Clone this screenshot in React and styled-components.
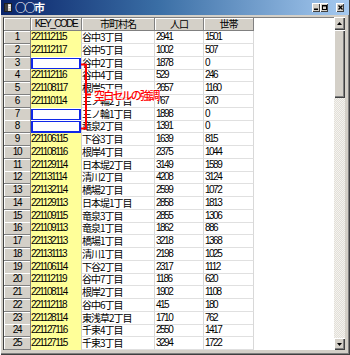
import React from "react";
import styled, { createGlobalStyle } from "styled-components";

const GlobalStyle = createGlobalStyle`
  html, body { margin: 0; padding: 0; background: #d4d0c8; }
  body { width: 350px; height: 355px; overflow: hidden; }
`;

const COLS = "27px 51px 73px 49px 50px 1fr";
const ROW_H = 12.76;
const NUM_FONT = `"Liberation Sans", Arial, sans-serif`;
const JP_FONT = `"Noto Sans CJK JP", "Noto Sans", sans-serif`;

const rows = [
  ["221112115", "谷中3丁目", "2941", "1501"],
  ["221112117", "谷中5丁目", "1002", "507"],
  ["", "谷中2丁目", "1878", "0"],
  ["221112116", "谷中4丁目", "529", "246"],
  ["221108117", "根岸5丁目", "2657", "1160"],
  ["221110114", "三ノ輪2丁目", "767", "370"],
  ["", "三ノ輪1丁目", "1898", "0"],
  ["", "竜泉2丁目", "1391", "0"],
  ["221106115", "下谷3丁目", "1639", "815"],
  ["221108116", "根岸4丁目", "2375", "1044"],
  ["221129114", "日本堤2丁目", "3149", "1589"],
  ["221131114", "清川2丁目", "4208", "3124"],
  ["221132114", "橋場2丁目", "2599", "1072"],
  ["221129113", "日本堤1丁目", "2858", "1813"],
  ["221109115", "竜泉3丁目", "2855", "1306"],
  ["221109113", "竜泉1丁目", "1862", "886"],
  ["221132113", "橋場1丁目", "3218", "1368"],
  ["221131113", "清川1丁目", "2198", "1025"],
  ["221106114", "下谷2丁目", "2317", "1112"],
  ["221112119", "谷中7丁目", "1186", "620"],
  ["221108114", "根岸2丁目", "1902", "1108"],
  ["221112118", "谷中6丁目", "415", "180"],
  ["221128114", "東浅草2丁目", "1710", "762"],
  ["221127116", "千束4丁目", "2550", "1417"],
  ["221127115", "千束3丁目", "3294", "1722"],
];

const Window = styled.div`
  position: relative;
  width: 350px;
  height: 355px;
  box-sizing: border-box;
  background: #d4d0c8;
  box-shadow: inset 1px 0 #ffffff, inset -1px -1px #404040, inset -2px -2px #808080;
  display: flex;
  flex-direction: column;
`;

const TitleBar = styled.div`
  height: 15px;
  margin: 0 1px;
  display: flex;
  align-items: center;
  padding-left: 3px;
  background: linear-gradient(to right, #0a246a 0%, #3a6ea5 45%, #a6caf0 100%);
`;

const AppIcon = styled.svg`
  width: 8px;
  height: 9px;
  flex: none;
`;

const Title = styled.span`
  margin-left: 3px;
  color: #ffffff;
  font-family: ${JP_FONT};
  font-weight: bold;
  font-size: 11px;
  letter-spacing: -1.5px;
  line-height: 15px;
  flex: 1;
`;

const Captions = styled.div`
  display: flex;
  align-items: center;
  margin-right: 5px;
`;

const CaptionButton = styled.div`
  width: 8px;
  height: 9px;
  box-sizing: border-box;
  background: #d4d0c8;
  box-shadow: inset 1px 1px #ffffff, inset -1px -1px #404040;
  display: flex;
  align-items: center;
  justify-content: center;
  margin-left: ${(p) => (p.$gap ? "8px" : "0")};
  svg { display: block; }
`;

const Client = styled.div`
  margin: 2px 5px 5px 3px;
  height: 333px;
  display: flex;
`;

const Grid = styled.div`
  flex: 1;
  box-sizing: border-box;
  border-top: 1px solid #808080;
  border-left: 1px solid #404040;
  background: #ffffff;
  overflow: hidden;
  display: flex;
  flex-direction: column;
`;

const HeaderRow = styled.div`
  display: grid;
  grid-template-columns: ${COLS};
  height: 13px;
  flex: none;
`;

const HeaderCell = styled.div`
  box-sizing: border-box;
  background: #d4d0c8;
  border-right: 1px solid #808080;
  border-bottom: 1px solid #808080;
  box-shadow: inset 1px 1px #ffffff;
  text-align: center;
  line-height: 12px;
  font-size: 10px;
  color: #000;
  font-family: ${(p) => (p.$latin ? NUM_FONT : JP_FONT)};
  letter-spacing: ${(p) => (p.$latin ? "-1.5px" : "-1px")};
  white-space: nowrap;
`;

const Row = styled.div`
  display: grid;
  grid-template-columns: ${COLS};
  height: ${ROW_H}px;
  flex: none;
`;

const RowHeader = styled.div`
  box-sizing: border-box;
  background: #d4d0c8;
  border-right: 1px solid #808080;
  border-bottom: 1px solid #808080;
  box-shadow: inset 1px 1px #ffffff;
  text-align: center;
  font-family: ${NUM_FONT};
  font-size: 10px;
  letter-spacing: -1.3px;
  line-height: 12px;
  color: #000;
`;

const KeyCell = styled.div`
  box-sizing: border-box;
  background: ${(p) => (p.$blank ? "#ffffff" : "#ffff99")};
  border-right: 1px solid #d0d0d0;
  box-shadow: ${(p) => (p.$blank ? "inset 0 1px #ffffff, inset 0 0 0 2px #1028e8" : "none")};
  font-family: ${NUM_FONT};
  font-size: 10px;
  letter-spacing: -1.4px;
  line-height: 12.5px;
  color: #000;
  white-space: nowrap;
`;

const NameCell = styled.div`
  box-sizing: border-box;
  border-right: 1px solid #d8d8d8;
  border-bottom: 1px solid #e0e0e0;
  font-family: ${JP_FONT};
  font-size: 10px;
  letter-spacing: -1px;
  line-height: 12px;
  color: #000;
  white-space: nowrap;
`;

const NumCell = styled.div`
  box-sizing: border-box;
  border-right: 1px solid #d8d8d8;
  border-bottom: 1px solid #e0e0e0;
  padding-left: 1px;
  font-family: ${NUM_FONT};
  font-size: 10px;
  letter-spacing: -1.5px;
  line-height: 12px;
  color: #000;
  white-space: nowrap;
`;

const Filler = styled.div`
  background: #ffffff;
`;

const ScrollBar = styled.div`
  width: 11px;
  flex: none;
  display: flex;
  flex-direction: column;
  background: repeating-conic-gradient(#f4f3ef 0% 25%, #e2dfd8 0% 50%) 0 0 / 2px 2px;
`;

const ScrollButton = styled.div`
  height: ${(p) => p.$h}px;
  flex: none;
  box-sizing: border-box;
  background: #d4d0c8;
  box-shadow: inset 1px 1px #ffffff, inset -1px -1px #404040, inset -2px -2px #808080;
  display: flex;
  align-items: center;
  justify-content: center;
`;

const ScrollThumb = styled.div`
  height: 68px;
  flex: none;
  background: #d4d0c8;
  box-shadow: inset 1px 1px #ffffff, inset -1px -1px #404040, inset -2px -2px #808080;
`;

const ScrollTrack = styled.div`
  flex: 1;
`;

const Overlay = styled.svg`
  position: absolute;
  left: 0;
  top: 0;
  width: 350px;
  height: 355px;
  pointer-events: none;
`;

const Note = styled.div`
  position: absolute;
  left: 93px;
  top: 89px;
  height: 12px;
  padding: 0 2px 0 1px;
  background: rgba(255, 255, 255, 0.82);
  color: #ff0000;
  font-family: ${JP_FONT};
  font-size: 11px;
  font-weight: 500;
  letter-spacing: -1.8px;
  line-height: 12px;
  white-space: nowrap;
`;

export default function App() {
  return (
    <>
      <GlobalStyle />
      <Window>
        <TitleBar>
          <AppIcon viewBox="0 0 8 9">
            <rect x="0.5" y="0.5" width="7" height="8" fill="#d4d0c8" stroke="#202020" />
            <rect x="1" y="1" width="3" height="7" fill="#404040" />
            <rect x="4.5" y="2" width="2" height="1" fill="#ffffff" />
            <rect x="4.5" y="4" width="2" height="1" fill="#ffffff" />
          </AppIcon>
          <Title>○○市</Title>
          <Captions>
            <CaptionButton>
              <svg width="4" height="5" viewBox="0 0 4 5"><rect x="0" y="3.5" width="4" height="1.5" fill="#000" /></svg>
            </CaptionButton>
            <CaptionButton>
              <svg width="5" height="5" viewBox="0 0 5 5"><rect x="0.5" y="0.5" width="4" height="4" fill="none" stroke="#000" /><rect x="0" y="0" width="5" height="1.5" fill="#000" /></svg>
            </CaptionButton>
            <CaptionButton $gap>
              <svg width="5" height="5" viewBox="0 0 5 5"><path d="M0.5 0.5 L4.5 4.5 M4.5 0.5 L0.5 4.5" stroke="#000" strokeWidth="1.3" /></svg>
            </CaptionButton>
          </Captions>
        </TitleBar>
        <Client>
          <Grid>
            <HeaderRow>
              <HeaderCell />
              <HeaderCell $latin>KEY_CODE</HeaderCell>
              <HeaderCell>市町村名</HeaderCell>
              <HeaderCell>人口</HeaderCell>
              <HeaderCell>世帯</HeaderCell>
              <Filler />
            </HeaderRow>
            {rows.map(([key, name, pop, hh], i) => (
              <Row key={i}>
                <RowHeader>{i + 1}</RowHeader>
                <KeyCell $blank={!key}>{key}</KeyCell>
                <NameCell>{name}</NameCell>
                <NumCell>{pop}</NumCell>
                <NumCell>{hh}</NumCell>
                <Filler />
              </Row>
            ))}
          </Grid>
          <ScrollBar>
            <ScrollButton $h={13}>
              <svg width="5" height="3" viewBox="0 0 5 3"><polygon points="2.5,0 5,3 0,3" fill="#000" /></svg>
            </ScrollButton>
            <ScrollThumb />
            <ScrollTrack />
            <ScrollButton $h={12}>
              <svg width="5" height="3" viewBox="0 0 5 3"><polygon points="0,0 5,0 2.5,3" fill="#000" /></svg>
            </ScrollButton>
          </ScrollBar>
        </Client>
        <Overlay viewBox="0 0 350 355">
          <path d="M81 64.5 H86 V128.5 H81 M86 94.5 H91" fill="none" stroke="#ff0000" strokeWidth="2" />
        </Overlay>
        <Note>空白セルの強調</Note>
      </Window>
    </>
  );
}
